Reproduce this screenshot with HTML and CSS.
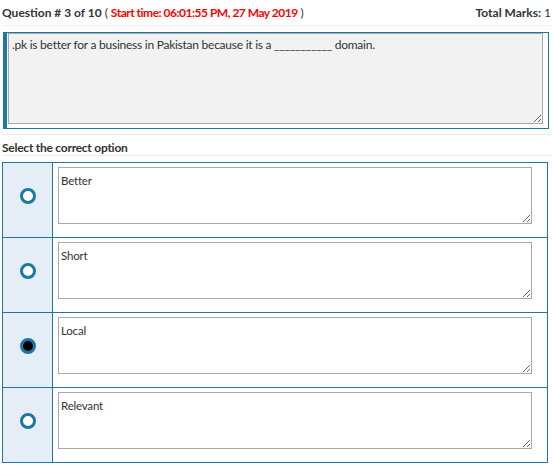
FILE: index.html
```html
<!DOCTYPE html>
<html lang="en">
  <head>
    <meta charset="UTF-8" />
    <meta name="viewport" content="width=device-width, initial-scale=1.0" />
    <title>Quiz</title>
    <link rel="stylesheet" href="styles.css">
  </head>
  <body>
    <div class="quizHeader">
      <span class="questionNo">Question # 3 of 10 <span class="normal">(</span> <span class="startTime">Start time: 06:01:55 PM, 27 May 2019</span> <span class="normal">)</span></span>
      <span class="totalMarks">Total Marks: <span class="normal">1</span></span>
    </div>

    <div class="questionBox">
      <textarea class="questionText" readonly>.pk is better for a business in Pakistan because it is a ___________ domain.</textarea>
    </div>

    <div class="prompt">Select the correct option</div>

    <table class="options">
      <tbody>
        <tr>
          <td class="radioCell"><span class="radio"></span></td>
          <td class="answerCell"><textarea class="answer" readonly>Better</textarea></td>
        </tr>
        <tr>
          <td class="radioCell"><span class="radio"></span></td>
          <td class="answerCell"><textarea class="answer" readonly>Short</textarea></td>
        </tr>
        <tr>
          <td class="radioCell"><span class="radio checked"></span></td>
          <td class="answerCell"><textarea class="answer" readonly>Local</textarea></td>
        </tr>
        <tr>
          <td class="radioCell"><span class="radio"></span></td>
          <td class="answerCell"><textarea class="answer" readonly>Relevant</textarea></td>
        </tr>
      </tbody>
    </table>
  </body>
</html>
```

FILE: styles.css
```css
body {
  font-family: "Lato", "Open Sans", sans-serif;
  font-size: 12px;
  letter-spacing: -0.25px;
  color: #333333;
  background-color: #ffffff;
  margin: 0;
  padding: 0 2px;
}

.quizHeader {
  display: flex;
  justify-content: space-between;
  align-items: center;
  height: 25px;
  border-bottom: 1px solid #eeeeee;
  font-weight: bold;
  letter-spacing: 0;
  margin-bottom: 6px;
}

.normal {
  font-weight: normal;
}

.startTime {
  color: #ff0000;
  letter-spacing: -0.5px;
}

.questionBox {
  display: flex;
  margin: 0 2px 0 1px;
  padding: 0 5px 4px 1px;
  border: 1px solid #1f77a4;
  border-left: 4px solid #1f77a4;
}

.questionText {
  flex: 1;
  height: 91px;
  box-sizing: border-box;
  margin: 0;
  padding: 3px 3px;
  font-family: "Lato", "Open Sans", sans-serif;
  font-size: 12px;
  letter-spacing: -0.25px;
  color: #333333;
  background-color: #f2f2f2;
  border: 1px solid #a9a9a9;
}

.prompt {
  margin: 5px 0 6px;
  padding: 5px 0 0;
  height: 15px;
  line-height: 15px;
  border-top: 1px solid #eeeeee;
  border-bottom: 1px solid #eeeeee;
  font-weight: bold;
}

.options {
  border-collapse: collapse;
  width: 546px;
}

.options td {
  border: 1px solid #1f77a4;
  padding: 0;
}

.radioCell {
  width: 49px;
  background-color: #e5edf7;
  text-align: center;
  vertical-align: top;
  padding-top: 25px !important;
}

.radio {
  display: block;
  width: 16px;
  height: 16px;
  box-sizing: border-box;
  margin: 0 auto;
  border: 3px solid #1f77a4;
  border-radius: 50%;
  background-color: #ffffff;
}

.radio.checked {
  background-color: #000000;
}

.answerCell {
  vertical-align: top;
  padding: 4px 15px 13px 5px !important;
}

.answer {
  display: block;
  width: 100%;
  height: 57px;
  box-sizing: border-box;
  margin: 0;
  padding: 6px 2px 2px;
  font-family: "Lato", "Open Sans", sans-serif;
  font-size: 11.5px;
  letter-spacing: -0.2px;
  color: #333333;
  border: 1px solid #a9a9a9;
  resize: vertical;
}
```
